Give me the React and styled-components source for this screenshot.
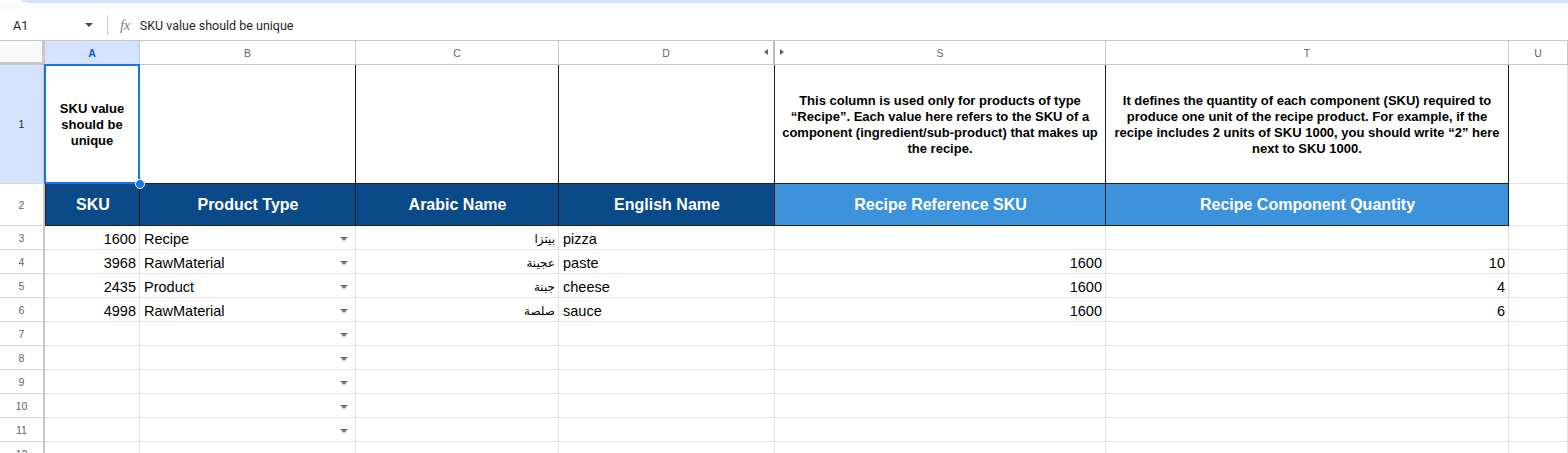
import React from "react";
import styled, { createGlobalStyle } from "styled-components";

const GlobalStyle = createGlobalStyle`
  body {
    margin: 0;
    background: #ffffff;
    overflow: hidden;
  }
`;

const Page = styled.div`
  width: 1568px;
  height: 453px;
  overflow: hidden;
  background: #ffffff;
`;

const TopStrip = styled.div`
  height: 3px;
  margin-left: 20px;
  background: #d3e3fd;
  border-bottom-left-radius: 14px 3px;
`;

const TopGap = styled.div`
  height: 7px;
  background: #f9fbfd;
`;

const FormulaBar = styled.div`
  display: flex;
  align-items: center;
  height: 30px;
  border-bottom: 1px solid #c4c7c5;
  font-family: Roboto, "Liberation Sans", sans-serif;
  font-size: 12.5px;
  color: #1f1f1f;
`;

const NameBox = styled.div`
  display: flex;
  align-items: center;
  justify-content: space-between;
  width: 80px;
  padding: 0 14px 0 13px;
`;

const Caret = styled.span`
  width: 0;
  height: 0;
  border-left: 4.5px solid transparent;
  border-right: 4.5px solid transparent;
  border-top: 4.5px solid #444746;
`;

const Divider = styled.div`
  width: 1px;
  height: 20px;
  background: #c4c7c5;
`;

const Fx = styled.span`
  font-family: "Liberation Serif", serif;
  font-style: italic;
  font-size: 15px;
  color: #80868b;
  margin: 0 10px 0 12px;
  letter-spacing: -0.5px;
`;

const Grid = styled.div`
  display: grid;
  grid-template-columns: 45px 95px 216px 203px 216px 331px 403px 1fr;
  grid-template-rows: 24px 119px 42px repeat(10, 24px);
  font-family: "Liberation Sans", Arial, sans-serif;
`;

const Corner = styled.div`
  box-sizing: border-box;
  background: #f8f9fa;
  border-right: 3px solid #c7c7c7;
  border-bottom: 3px solid #c7c7c7;
`;

const ColHead = styled.div`
  box-sizing: border-box;
  position: relative;
  display: flex;
  align-items: center;
  justify-content: center;
  font-size: 10.5px;
  color: ${p => (p.$selected ? "#0b57d0" : "#5f6368")};
  font-weight: ${p => (p.$selected ? 700 : 400)};
  background: ${p => (p.$selected ? "#d3e3fd" : "#ffffff")};
  border-right: ${p => (p.$hiddenAfter ? "2px solid #bdbdbd" : "1px solid #c7c7c7")};
  border-bottom: 1px solid #c7c7c7;
`;

const Arrow = styled.span`
  position: absolute;
  top: 8px;
  width: 0;
  height: 0;
  border-top: 3.5px solid transparent;
  border-bottom: 3.5px solid transparent;
  ${p =>
    p.$dir === "left"
      ? "right: 5px; border-right: 4px solid #5f6368;"
      : "left: 5px; border-left: 4px solid #5f6368;"}
`;

const RowHead = styled.div`
  box-sizing: border-box;
  display: flex;
  align-items: center;
  justify-content: center;
  font-size: 10.5px;
  color: ${p => (p.$selected ? "#1f1f1f" : "#5f6368")};
  background: ${p => (p.$selected ? "#d3e3fd" : "#ffffff")};
  border-right: 2px solid #c7c7c7;
  border-bottom: 1px solid #d7d7d7;
`;

const Cell = styled.div`
  box-sizing: border-box;
  position: relative;
  display: flex;
  align-items: center;
  justify-content: ${p =>
    p.$align === "right" ? "flex-end" : p.$align === "center" ? "center" : "space-between"};
  padding: 3px 3px 0 4px;
  font-size: 14.5px;
  color: #000000;
  white-space: nowrap;
  border-right: 1px solid ${p => (p.$strong ? "#1f1f1f" : "#e1e1e1")};
  border-bottom: 1px solid ${p => (p.$strong ? "#1f1f1f" : "#e1e1e1")};
  border-left: ${p => (p.$leftEdge ? "1px solid #1f1f1f" : "none")};
`;

const Arabic = styled.span`
  font-family: "DejaVu Sans", "Liberation Sans", sans-serif;
  font-size: 12px;
`;

const Note = styled(Cell)`
  justify-content: center;
  text-align: center;
  white-space: normal;
  font-weight: 700;
  font-size: 13px;
  line-height: 16px;
  padding: 2px 1px 0;
`;

const HeadCell = styled(Cell)`
  justify-content: center;
  font-weight: 700;
  font-size: 16px;
  color: #ffffff;
  padding-top: 1px;
  background: ${p => (p.$tone === "sky" ? "#3d92dc" : "#0a4a88")};
`;

const DropCaret = styled.span`
  width: 0;
  height: 0;
  margin-right: 4px;
  border-left: 4.5px solid transparent;
  border-right: 4.5px solid transparent;
  border-top: 4.5px solid #757575;
`;

const Selection = styled.div`
  position: absolute;
  inset: -1px -1px -1px -1px;
  border: 2px solid #1a73e8;
  pointer-events: none;
`;

const Handle = styled.div`
  position: absolute;
  right: -6px;
  bottom: -6px;
  width: 8px;
  height: 8px;
  border-radius: 50%;
  background: #1a73e8;
  border: 1.5px solid #ffffff;
  z-index: 2;
`;

const columns = ["A", "B", "C", "D", "S", "T", "U"];

const rows = [
  { n: 3, sku: "1600", type: "Recipe", ar: "بيتزا", en: "pizza", ref: "", qty: "" },
  { n: 4, sku: "3968", type: "RawMaterial", ar: "عجينة", en: "paste", ref: "1600", qty: "10" },
  { n: 5, sku: "2435", type: "Product", ar: "جبنة", en: "cheese", ref: "1600", qty: "4" },
  { n: 6, sku: "4998", type: "RawMaterial", ar: "صلصة", en: "sauce", ref: "1600", qty: "6" },
  ...[7, 8, 9, 10, 11, 12].map(n => ({ n, sku: "", type: "", ar: "", en: "", ref: "", qty: "" })),
];

export default function App() {
  return (
    <Page>
      <GlobalStyle />
      <TopStrip />
      <TopGap />
      <FormulaBar>
        <NameBox>
          <span>A1</span>
          <Caret />
        </NameBox>
        <Divider />
        <Fx>fx</Fx>
        <span>SKU value should be unique</span>
      </FormulaBar>

      <Grid>
        <Corner />
        {columns.map(c => (
          <ColHead key={c} $selected={c === "A"} $hiddenAfter={c === "D"}>
            {c}
            {c === "D" && <Arrow $dir="left" />}
            {c === "S" && <Arrow $dir="right" />}
          </ColHead>
        ))}

        <RowHead $selected>1</RowHead>
        <Note $strong>
          SKU value should be unique
          <Selection />
          <Handle />
        </Note>
        <Note $strong />
        <Note $strong />
        <Note $strong />
        <Note $strong>
          This column is used only for products of type “Recipe”. Each value here refers to the SKU of a
          component (ingredient/sub-product) that makes up the recipe.
        </Note>
        <Note $strong>
          It defines the quantity of each component (SKU) required to produce one unit of the recipe
          product. For example, if the recipe includes 2 units of SKU 1000, you should write “2” here next
          to SKU 1000.
        </Note>
        <Cell />

        <RowHead>2</RowHead>
        <HeadCell $strong $leftEdge>SKU</HeadCell>
        <HeadCell $strong>Product Type</HeadCell>
        <HeadCell $strong>Arabic Name</HeadCell>
        <HeadCell $strong>English Name</HeadCell>
        <HeadCell $strong $tone="sky">Recipe Reference SKU</HeadCell>
        <HeadCell $strong $tone="sky">Recipe Component Quantity</HeadCell>
        <Cell />

        {rows.map(r => (
          <React.Fragment key={r.n}>
            <RowHead>{r.n}</RowHead>
            <Cell $align="right">{r.sku}</Cell>
            <Cell>
              <span>{r.type}</span>
              <DropCaret />
            </Cell>
            <Cell $align="right">
              <Arabic dir="rtl">{r.ar}</Arabic>
            </Cell>
            <Cell>{r.en}</Cell>
            <Cell $align="right">{r.ref}</Cell>
            <Cell $align="right">{r.qty}</Cell>
            <Cell />
          </React.Fragment>
        ))}
      </Grid>
    </Page>
  );
}
